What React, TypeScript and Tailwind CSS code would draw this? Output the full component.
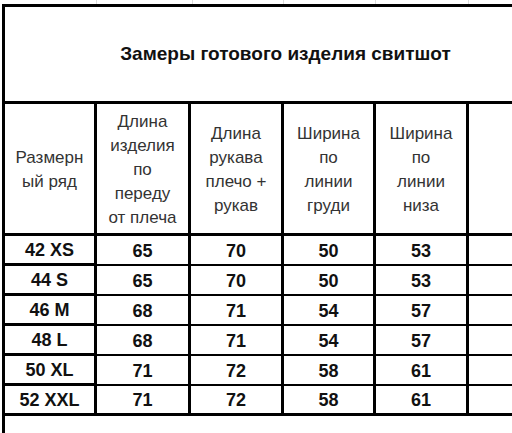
const rows = [
  ["42 XS", "65", "70", "50", "53"],
  ["44 S", "65", "70", "50", "53"],
  ["46 M", "68", "71", "54", "57"],
  ["48 L", "68", "71", "54", "57"],
  ["50 XL", "71", "72", "58", "61"],
  ["52 XXL", "71", "72", "58", "61"],
];

const headers = [
  ["Размерн", "ый ряд"],
  ["Длина", "изделия", "по", "переду", "от плеча"],
  ["Длина", "рукава", "плечо +", "рукав"],
  ["Ширина", "по", "линии", "груди"],
  ["Ширина", "по", "линии", "низа"],
];

export default function App() {
  return (
    <div className="h-[433px] w-[512px] overflow-hidden bg-white font-['Liberation_Sans',Arial,sans-serif]">
      {/* faint sheet gridlines above the table */}
      <div className="ml-[2px] flex h-[4px] w-[600px]">
        <div className="w-[95px] border-r border-[#dcdcdc]" />
        <div className="w-[96px] border-r border-[#dcdcdc]" />
        <div className="w-[91px] border-r border-[#dcdcdc]" />
        <div className="w-[92px] border-r border-[#dcdcdc]" />
        <div className="w-[93px] border-r border-[#dcdcdc]" />
      </div>

      <div className="ml-[2px] w-[564px] border-l-[3px] border-t-[3px] border-black">
        <div className="grid grid-cols-[92px_94px_93px_92px_93px_97px]">
          <div className="col-span-6 flex h-[97px] items-center justify-center border-b-[3px] border-black text-[19px] font-bold text-[#111]">
            Замеры готового изделия свитшот
          </div>

          {headers.map((lines, i) => (
            <div
              key={i}
              className="flex h-[132px] flex-col items-center justify-center border-b-[3px] border-r-[3px] border-black pt-[2px] text-[17px] leading-[24px] text-[#333]"
            >
              {lines.map((l) => (
                <span key={l}>{l}</span>
              ))}
            </div>
          ))}
          <div className="h-[132px] border-b-[3px] border-black" />

          {rows.map((row, r) => {
            const last = r === rows.length - 1;
            return row
              .map((v, c) => (
                <div
                  key={`${r}-${c}`}
                  className={
                    "flex h-[30px] items-center justify-center border-r-[3px] border-black pt-[2px] text-[18px] font-bold text-[#111] " +
                    (last ? "border-b-[3px]" : c === 0 ? "border-b-[3px]" : "border-b-2")
                  }
                >
                  {v}
                </div>
              ))
              .concat(
                <div
                  key={`${r}-e`}
                  className={"h-[30px] border-black " + (last ? "border-b-[3px]" : "border-b-2")}
                />
              );
          })}
        </div>
        <div className="h-[20px]" />
      </div>
    </div>
  );
}
